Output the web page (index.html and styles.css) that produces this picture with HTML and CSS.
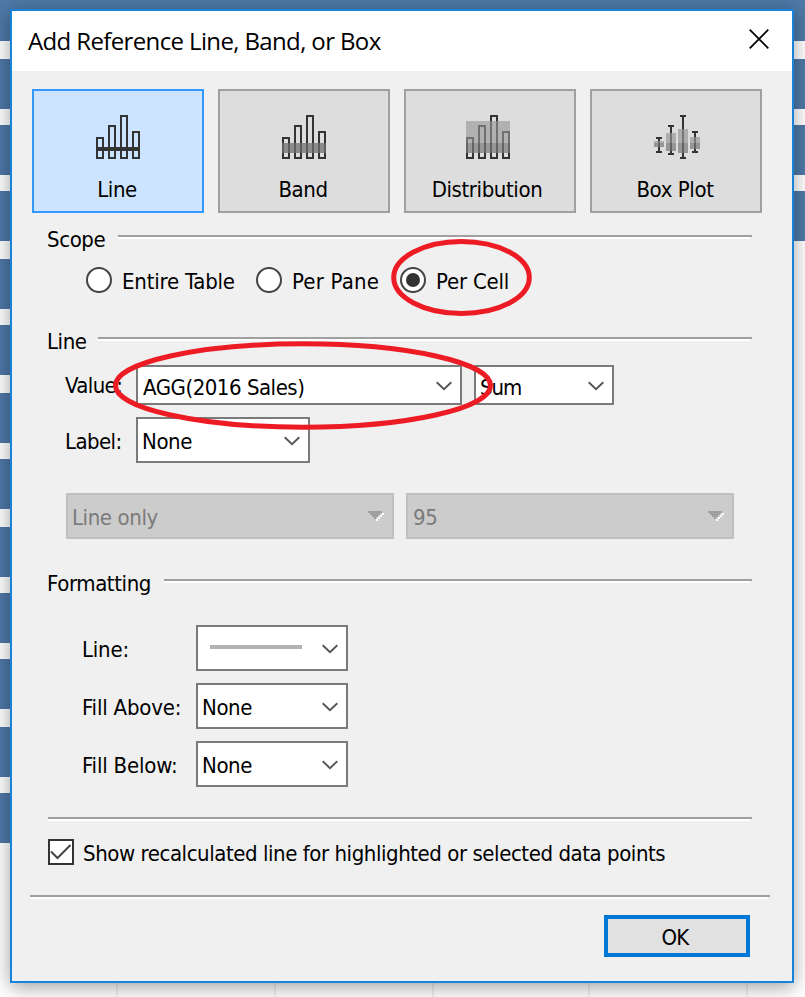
FILE: index.html
```html
<!DOCTYPE html>
<html lang="en">
<head>
<meta charset="utf-8">
<title>Add Reference Line, Band, or Box</title>
<link rel="stylesheet" href="styles.css">
</head>
<body>
<svg class="defs" width="0" height="0" aria-hidden="true">
  <symbol id="bars" viewBox="0 0 44 44">
    <g fill="none" stroke="#333" stroke-width="2">
      <rect x="1" y="23" width="6" height="20"/><rect x="13" y="11" width="6" height="32"/>
      <rect x="25" y="1" width="6" height="42"/><rect x="37" y="17" width="6" height="26"/>
    </g>
  </symbol>
  <symbol id="chevron" viewBox="0 0 16 10"><path d="M.7 1.2 8 8.2l7.300-7" fill="none" stroke="#555" stroke-width="1.900"/></symbol>
  <symbol id="arrow" viewBox="0 0 16 10"><g shape-rendering="crispEdges"><path d="M8 8h2V6h2V4h2V2h2v2h-2v2h-2v2h-2v2H8z" fill="#fff"/><path d="M0 0h14v2h-2v2h-2v2H8v2H6V6H4V4H2V2H0z" fill="#a0a0a0"/></g></symbol>
</svg>
<main class="screen">
  <div class="chart">
    <div class="grid"><i></i><i></i><i></i><i></i><i></i></div>
    <div class="bars">
      <i></i><i></i><i></i><i></i><i></i><i></i><i></i><i></i><i></i><i></i><i></i><i></i><i></i>
    </div>
  </div>
  <section class="dialog">
    <header class="titlebar">
      <h1>Add Reference Line, Band, or Box</h1>
      <svg class="close" width="20" height="20" viewBox="0 0 20 20"><path d="M.7.7l18.600 18.600M19.300.7.7 19.300" stroke="#000" stroke-width="1.800"/></svg>
    </header>

    <div class="tools">
      <div class="tool selected">
        <svg width="44" height="44"><use href="#bars"/><rect y="32" width="44" height="4" fill="#333"/></svg>
        <span>Line</span>
      </div>
      <div class="tool">
        <svg width="44" height="44"><use href="#bars"/><rect y="28" width="44" height="10" fill="#6f6f6f" fill-opacity=".735"/></svg>
        <span>Band</span>
      </div>
      <div class="tool shift">
        <svg width="44" height="44"><use href="#bars"/><rect y="6" width="44" height="22" fill="#969696" fill-opacity=".62"/><rect y="28" width="44" height="10" fill="#787878" fill-opacity=".7"/></svg>
        <span>Distribution</span>
      </div>
      <div class="tool">
        <svg class="boxplot" width="46" height="44">
          <path d="M2 22h6v2H6v12h2v2H2v-2h2V24H2zM14 10h6v2h-2v26h2v2h-6v-2h2V12h-2zM26 0h6v2h-2v40h2v2h-6v-2h2V2h-2zM38 16h6v2h-2v18h2v2h-6v-2h2V18h-2z" fill="#333"/>
          <path d="M0 26h10v2H0zM12 18h10v10H12zM24 14h10v14H24zM36 22h10v6H36z" fill="#969696" fill-opacity=".68"/>
          <path d="M0 28h10v4H0zM12 28h10v8H12zM24 28h10v10H24zM36 28h10v6H36z" fill="#787878" fill-opacity=".7"/>
        </svg>
        <span>Box Plot</span>
      </div>
    </div>

    <div class="group scope">
      <h2>Scope</h2><hr>
    </div>
    <div class="radios">
      <label><b class="radio"></b><span>Entire Table</span></label>
      <label><b class="radio"></b><span class="wide">Per Pane</span></label>
      <label><b class="radio on"></b><span>Per Cell</span></label>
    </div>

    <div class="group line">
      <h2>Line</h2><hr>
    </div>
    <div class="field value">
      <label>Value:</label>
      <div class="combo agg"><span>AGG(2016 Sales)</span><svg><use href="#chevron"/></svg></div>
      <div class="combo sum"><span>Sum</span><svg><use href="#chevron"/></svg></div>
    </div>
    <div class="field label">
      <label>Label:</label>
      <div class="combo"><span>None</span><svg><use href="#chevron"/></svg></div>
    </div>
    <div class="disabled-row">
      <div class="combo disabled"><span>Line only</span><svg><use href="#arrow"/></svg></div>
      <div class="combo disabled"><span>95</span><svg><use href="#arrow"/></svg></div>
    </div>

    <div class="group formatting">
      <h2>Formatting</h2><hr>
    </div>
    <div class="formats">
      <div class="format"><label>Line:</label><div class="combo"><i class="stroke"></i><svg><use href="#chevron"/></svg></div></div>
      <div class="format"><label>Fill Above:</label><div class="combo"><span>None</span><svg><use href="#chevron"/></svg></div></div>
      <div class="format"><label>Fill Below:</label><div class="combo"><span>None</span><svg><use href="#chevron"/></svg></div></div>
    </div>

    <hr class="inner">
    <label class="recalc">
      <svg width="26" height="26" viewBox="0 0 26 26"><rect x="1" y="1" width="24" height="24" fill="#fff" stroke="#333" stroke-width="2"/><path d="M3 12.500 9.500 19 22.500 6" fill="none" stroke="#444" stroke-width="2"/></svg>
      <span>Show recalculated line for highlighted or selected data points</span>
    </label>
    <hr class="outer">
    <div class="footer"><button type="button">OK</button></div>
  </section>
  <svg class="marks" width="805" height="997" viewBox="0 0 805 997">
    <g fill="none" stroke="#ed1c24" stroke-width="5">
      <ellipse cx="461.500" cy="277.500" rx="67.800" ry="36"/>
      <ellipse cx="303" cy="385.500" rx="187.500" ry="41.700"/>
    </g>
  </svg>
</main>
</body>
</html>
```
FILE: styles.css
```css
* { box-sizing: border-box; }
body {
  margin: 0;
  overflow: hidden;
  background: #fff;
  color: #000;
  font: 22px/20px "DejaVu Sans Condensed", "DejaVu Sans", sans-serif;
  font-stretch: condensed;
  letter-spacing: -0.4px;
}
.defs { position: absolute; }
h1, h2 { margin: 0; font-weight: 400; font-size: inherit; }

.screen { display: grid; width: 805px; height: 997px; overflow: hidden; }
.chart, .dialog, .marks { grid-area: 1 / 1; }
.chart { display: grid; background: #fff; }
.grid, .bars { grid-area: 1 / 1; }
.grid { display: flex; gap: 156px; padding-left: 116px; }
.grid i { flex: none; width: 2px; background: #f0f0f0; }
.grid i:nth-child(4) { margin-left: -2px; }
.bars { display: flex; flex-direction: column; }
.bars i { flex: none; height: 50px; margin-bottom: 16px; background: #4e79a7; }
.bars i:nth-child(1) { height: 41px; }
.bars i:nth-child(1), .bars i:nth-child(4), .bars i:nth-child(6),
.bars i:nth-child(8), .bars i:nth-child(11) { margin-bottom: 18px; }
.bars i:nth-child(n+5) { width: 400px; }

.dialog {
  display: flex;
  flex-direction: column;
  width: 784px;
  height: 974px;
  margin: 9px 0 0 10px;
  border: 2px solid #1883d7;
  background: #f0f0f0;
  box-shadow: 0 4px 18px rgba(0, 0, 0, .38);
}
.titlebar {
  display: flex;
  justify-content: space-between;
  height: 60px;
  padding: 18px 23px 0 16px;
  background: #fff;
}
.titlebar h1 { margin-top: -1px; font: 24px/26px "Open Sans", sans-serif; letter-spacing: -0.63px; white-space: nowrap; }

.tools { display: flex; gap: 14px; padding: 18px 0 0 20px; }
.tool {
  display: flex;
  flex-direction: column;
  align-items: center;
  width: 172px;
  height: 124px;
  padding-top: 24px;
  border: 2px solid #a0a0a0;
  background: #ddd;
}
.tool.selected { border-color: #3399ff; background: #cce4ff; }
.tool.shift { padding-right: 4px; }
.tool span { margin: 21px 2px 0 0; }
.tool.shift span { margin-right: 2px; }
.boxplot { margin-left: 2px; }

hr {
  flex: 1;
  height: 4px;
  margin: 0;
  border: 0;
  border-top: 2px solid #a0a0a0;
  background: linear-gradient(#fff, #fff) 0 0 / calc(100% - 2px) 2px no-repeat;
}
.group { display: flex; width: 705px; height: 20px; margin-left: 35px; }
.group h2 { padding-top: 1px; }
.group hr { margin-top: 6px; }
.scope { margin-top: 16px; }
.scope h2 { width: 71px; }
.line { margin-top: 38px; }
.line h2 { width: 51px; }
.formatting { margin-top: 34px; }
.formatting h2 { width: 117px; }

.radios { display: flex; height: 26px; margin: 18px 0 0 74px; letter-spacing: -0.2px; }
.radios label { display: flex; gap: 10px; align-items: center; width: 170px; }
.radios label:nth-child(2) { width: 144px; }
.radios span { padding-top: 3px; white-space: nowrap; }
.radios .wide { letter-spacing: 0.2px; }
.radio {
  display: grid;
  place-items: center;
  width: 26px;
  height: 26px;
  border: 2px solid #444;
  border-radius: 50%;
  background: #fff;
}
.radio.on::after { content: ""; width: 14px; height: 14px; border-radius: 50%; background: #333; }

.field { display: flex; align-items: center; margin-left: 53px; }
.field label { width: 71px; padding-top: 2px; letter-spacing: -0.6px; }
.value { height: 40px; margin-top: 14px; }
.label { height: 46px; margin-top: 12px; }
.label label { padding-top: 4px; }
.combo {
  display: flex;
  align-items: center;
  justify-content: space-between;
  width: 174px;
  height: 46px;
  padding: 0 8px 0 4px;
  border: 2px solid #7a7a7a;
  background: #fff;
}
.combo span { padding-top: 3px; white-space: nowrap; }
.combo svg { width: 16px; height: 10px; margin-top: 2px; }
.combo.agg { width: 326px; height: 40px; padding-left: 5px; }
.combo.sum { width: 140px; height: 40px; margin-left: 12px; }
.combo.agg span, .combo.sum span { padding-top: 5px; }
.combo.agg span { letter-spacing: -0.48px; }
.combo.sum span { letter-spacing: -1px; }
.disabled-row { display: flex; gap: 12px; margin: 30px 0 0 54px; }
.combo.disabled { width: 328px; border-color: #bfbfbf; background: #ccc; color: #7b7b7b; }
.combo.disabled svg { margin-top: 0; }
.combo.disabled:last-child { padding-left: 5px; }

.formats { display: grid; gap: 12px; margin: 32px 0 0 70px; }
.format { display: flex; align-items: center; height: 46px; }
.format label { width: 114px; padding-top: 4px; letter-spacing: -0.2px; white-space: nowrap; }
.format .combo { width: 152px; }
.stroke { width: 92px; height: 4px; margin: 0 0 2px 8px; background: #b2b2b2; }

hr.inner { flex: none; width: 704px; margin: 30px 0 0 36px; }
.recalc { display: flex; gap: 9px; align-items: center; height: 26px; margin: 18px 0 0 36px; letter-spacing: -0.44px; }
.recalc span { padding-top: 3px; white-space: nowrap; }
hr.outer { flex: none; width: 740px; margin: 30px 0 0 18px; }
.footer { display: flex; justify-content: flex-end; padding: 16px 42px 0 0; }
.footer button {
  width: 146px;
  height: 42px;
  padding: 3px 4px 0 0;
  border: 4px solid #0078d7;
  background: #e1e1e1;
  color: #000;
  font: inherit;
  letter-spacing: -0.8px;
}
.marks { z-index: 1; pointer-events: none; }
```
